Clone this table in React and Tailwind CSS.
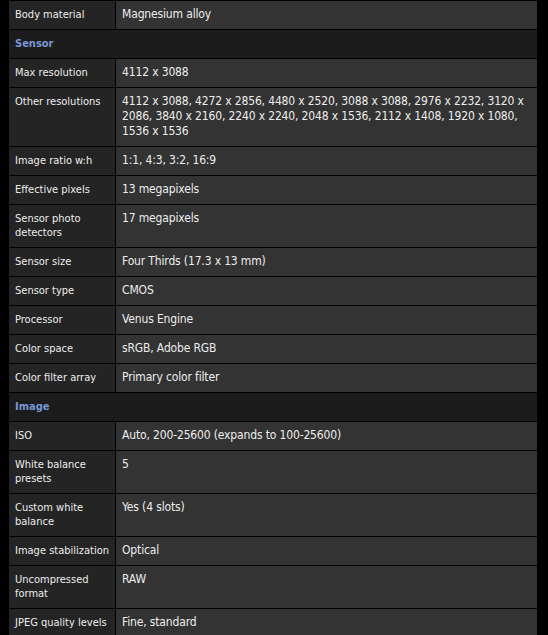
import React from 'react'

const rows = [
  ["Body material", "Magnesium alloy"],
  { header: "Sensor" },
  ["Max resolution", "4112 x 3088"],
  ["Other resolutions", "4112 x 3088, 4272 x 2856, 4480 x 2520, 3088 x 3088, 2976 x 2232, 3120 x 2086, 3840 x 2160, 2240 x 2240, 2048 x 1536, 2112 x 1408, 1920 x 1080, 1536 x 1536"],
  ["Image ratio w:h", "1:1, 4:3, 3:2, 16:9"],
  ["Effective pixels", "13 megapixels"],
  ["Sensor photo detectors", "17 megapixels"],
  ["Sensor size", "Four Thirds (17.3 x 13 mm)"],
  ["Sensor type", "CMOS"],
  ["Processor", "Venus Engine"],
  ["Color space", "sRGB, Adobe RGB"],
  ["Color filter array", "Primary color filter"],
  { header: "Image" },
  ["ISO", "Auto, 200-25600 (expands to 100-25600)"],
  ["White balance presets", "5"],
  ["Custom white balance", "Yes (4 slots)"],
  ["Image stabilization", "Optical"],
  ["Uncompressed format", "RAW"],
  ["JPEG quality levels", "Fine, standard"],
]

const App = () => {
  return (
    <div
      className="min-h-screen bg-black pl-[9px] pt-px text-[#ededed]"
      style={{ fontFamily: '"DejaVu Sans Condensed", "DejaVu Sans", sans-serif', fontStretch: "condensed" }}
    >
      <div className="w-[528px]">
        {rows.map((r, i) =>
          r.header ? (
            <div key={i} className="bg-[#1c1c1c] border-b border-black px-[6px] py-[7px] text-[11px] leading-[14px] font-bold text-[#7896d4]">
              {r.header}
            </div>
          ) : (
            <div key={i} className="flex border-b border-black">
              <div className="w-[107px] shrink-0 bg-[#242424] pl-[6px] pr-[4px] py-[7px] border-r border-black text-[11px] leading-[14px]">
                {r[0]}
              </div>
              <div className="flex-1 bg-[#333333] pl-[6px] pr-[4px] pt-[6px] pb-[7px] text-[12px] leading-[15px] tracking-[-0.15px]">
                {r[1]}
              </div>
            </div>
          )
        )}
      </div>
    </div>
  )
}

export default App
